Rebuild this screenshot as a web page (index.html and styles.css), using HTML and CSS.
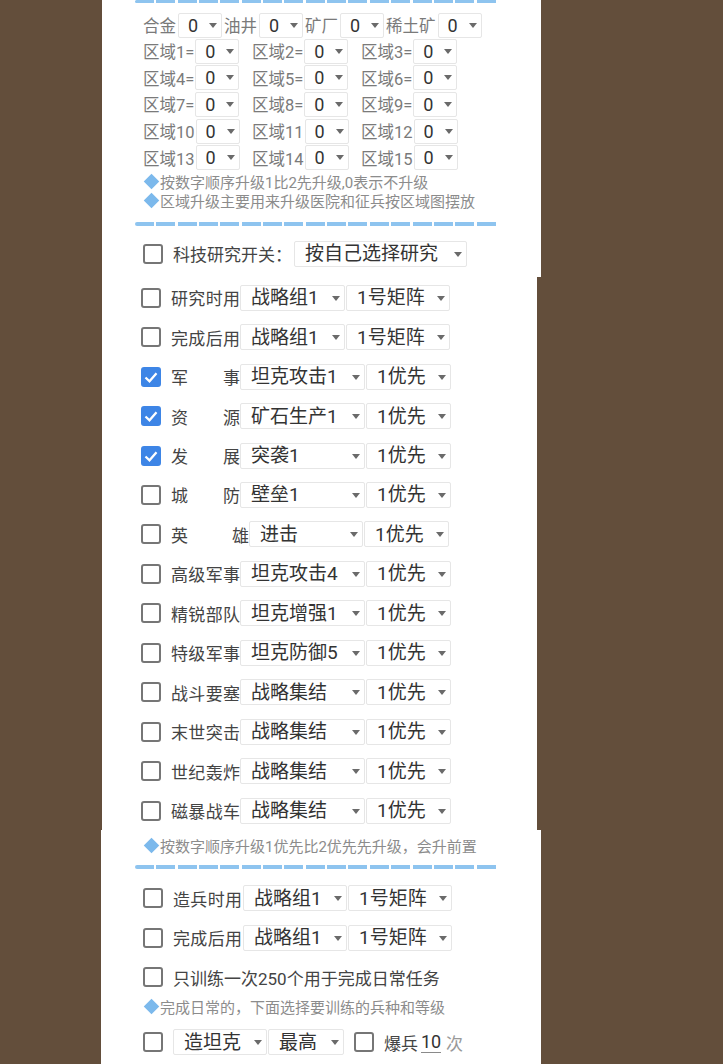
FILE: index.html
```html
<!DOCTYPE html>
<html lang="zh-CN">
<head>
    <meta charset="UTF-8">
    <meta name="viewport" content="width=device-width, initial-scale=1.0">
    <title>升级设置</title>
    <link rel="stylesheet" href="styles.css">
</head>
<body>
    <!-- 资源/区域升级 -->
    <div class="panel panel-top">
        <div class="sep sep-cut"></div>
        <div class="res-row">
            <span class="lbl">合金</span><span class="sel sel-num"><select><option>0</option><option>1</option></select></span>
            <span class="lbl">油井</span><span class="sel sel-num"><select><option>0</option><option>1</option></select></span>
            <span class="lbl">矿厂</span><span class="sel sel-num"><select><option>0</option><option>1</option></select></span>
            <span class="lbl">稀土矿</span><span class="sel sel-num"><select><option>0</option><option>1</option></select></span>
        </div>
        <div class="area-row">
            <div class="grp"><span class="lbl">区域1=</span><span class="sel sel-num"><select><option>0</option></select></span></div>
            <div class="grp"><span class="lbl">区域2=</span><span class="sel sel-num"><select><option>0</option></select></span></div>
            <div class="grp"><span class="lbl">区域3=</span><span class="sel sel-num"><select><option>0</option></select></span></div>
        </div>
        <div class="area-row">
            <div class="grp"><span class="lbl">区域4=</span><span class="sel sel-num"><select><option>0</option></select></span></div>
            <div class="grp"><span class="lbl">区域5=</span><span class="sel sel-num"><select><option>0</option></select></span></div>
            <div class="grp"><span class="lbl">区域6=</span><span class="sel sel-num"><select><option>0</option></select></span></div>
        </div>
        <div class="area-row">
            <div class="grp"><span class="lbl">区域7=</span><span class="sel sel-num"><select><option>0</option></select></span></div>
            <div class="grp"><span class="lbl">区域8=</span><span class="sel sel-num"><select><option>0</option></select></span></div>
            <div class="grp"><span class="lbl">区域9=</span><span class="sel sel-num"><select><option>0</option></select></span></div>
        </div>
        <div class="area-row">
            <div class="grp"><span class="lbl">区域10</span><span class="sel sel-num"><select><option>0</option></select></span></div>
            <div class="grp"><span class="lbl">区域11</span><span class="sel sel-num"><select><option>0</option></select></span></div>
            <div class="grp"><span class="lbl">区域12</span><span class="sel sel-num"><select><option>0</option></select></span></div>
        </div>
        <div class="area-row">
            <div class="grp"><span class="lbl">区域13</span><span class="sel sel-num"><select><option>0</option></select></span></div>
            <div class="grp"><span class="lbl">区域14</span><span class="sel sel-num"><select><option>0</option></select></span></div>
            <div class="grp"><span class="lbl">区域15</span><span class="sel sel-num"><select><option>0</option></select></span></div>
        </div>
        <div class="notes">
            <p class="note"><span class="dia"></span>按数字顺序升级1比2先升级,0表示不升级</p>
            <p class="note"><span class="dia"></span>区域升级主要用来升级医院和征兵按区域图摆放</p>
        </div>
        <div class="sep sep-top"></div>
        <div class="row switch-row">
            <label class="chk"><input type="checkbox"><span class="box"><svg viewBox="0 0 20 20"><polyline points="4.5,10.5 8.5,14.3 15.5,6.2"/></svg></span></label>
            <span class="name name-free">科技研究开关：</span>
            <span class="sel sel-mode"><select><option>按自己选择研究</option><option>按顺序研究</option></select></span>
        </div>
    </div>

    <!-- 科技研究 -->
    <div class="panel panel-mid">
        <div class="row">
            <label class="chk"><input type="checkbox"><span class="box"><svg viewBox="0 0 20 20"><polyline points="4.5,10.5 8.5,14.3 15.5,6.2"/></svg></span></label>
            <span class="name">研究时用</span>
            <span class="sel sel-a"><select><option>战略组1</option><option>战略组2</option></select></span>
            <span class="sel sel-b"><select><option>1号矩阵</option><option>2号矩阵</option></select></span>
        </div>
        <div class="row">
            <label class="chk"><input type="checkbox"><span class="box"><svg viewBox="0 0 20 20"><polyline points="4.5,10.5 8.5,14.3 15.5,6.2"/></svg></span></label>
            <span class="name">完成后用</span>
            <span class="sel sel-a"><select><option>战略组1</option><option>战略组2</option></select></span>
            <span class="sel sel-b"><select><option>1号矩阵</option><option>2号矩阵</option></select></span>
        </div>
        <div class="row">
            <label class="chk"><input type="checkbox" checked><span class="box"><svg viewBox="0 0 20 20"><polyline points="4.5,10.5 8.5,14.3 15.5,6.2"/></svg></span></label>
            <span class="name">军事</span>
            <span class="sel sel-c"><select><option>坦克攻击1</option></select></span>
            <span class="sel sel-d"><select><option>1优先</option><option>2优先</option></select></span>
        </div>
        <div class="row">
            <label class="chk"><input type="checkbox" checked><span class="box"><svg viewBox="0 0 20 20"><polyline points="4.5,10.5 8.5,14.3 15.5,6.2"/></svg></span></label>
            <span class="name">资源</span>
            <span class="sel sel-c"><select><option>矿石生产1</option></select></span>
            <span class="sel sel-d"><select><option>1优先</option><option>2优先</option></select></span>
        </div>
        <div class="row">
            <label class="chk"><input type="checkbox" checked><span class="box"><svg viewBox="0 0 20 20"><polyline points="4.5,10.5 8.5,14.3 15.5,6.2"/></svg></span></label>
            <span class="name">发展</span>
            <span class="sel sel-c"><select><option>突袭1</option></select></span>
            <span class="sel sel-d"><select><option>1优先</option><option>2优先</option></select></span>
        </div>
        <div class="row">
            <label class="chk"><input type="checkbox"><span class="box"><svg viewBox="0 0 20 20"><polyline points="4.5,10.5 8.5,14.3 15.5,6.2"/></svg></span></label>
            <span class="name">城防</span>
            <span class="sel sel-c"><select><option>壁垒1</option></select></span>
            <span class="sel sel-d"><select><option>1优先</option><option>2优先</option></select></span>
        </div>
        <div class="row">
            <label class="chk"><input type="checkbox"><span class="box"><svg viewBox="0 0 20 20"><polyline points="4.5,10.5 8.5,14.3 15.5,6.2"/></svg></span></label>
            <span class="name name-wide">英雄</span>
            <span class="sel sel-e"><select><option>进击</option></select></span>
            <span class="sel sel-d"><select><option>1优先</option><option>2优先</option></select></span>
        </div>
        <div class="row">
            <label class="chk"><input type="checkbox"><span class="box"><svg viewBox="0 0 20 20"><polyline points="4.5,10.5 8.5,14.3 15.5,6.2"/></svg></span></label>
            <span class="name">高级军事</span>
            <span class="sel sel-c"><select><option>坦克攻击4</option></select></span>
            <span class="sel sel-d"><select><option>1优先</option><option>2优先</option></select></span>
        </div>
        <div class="row">
            <label class="chk"><input type="checkbox"><span class="box"><svg viewBox="0 0 20 20"><polyline points="4.5,10.5 8.5,14.3 15.5,6.2"/></svg></span></label>
            <span class="name">精锐部队</span>
            <span class="sel sel-c"><select><option>坦克增强1</option></select></span>
            <span class="sel sel-d"><select><option>1优先</option><option>2优先</option></select></span>
        </div>
        <div class="row">
            <label class="chk"><input type="checkbox"><span class="box"><svg viewBox="0 0 20 20"><polyline points="4.5,10.5 8.5,14.3 15.5,6.2"/></svg></span></label>
            <span class="name">特级军事</span>
            <span class="sel sel-c"><select><option>坦克防御5</option></select></span>
            <span class="sel sel-d"><select><option>1优先</option><option>2优先</option></select></span>
        </div>
        <div class="row">
            <label class="chk"><input type="checkbox"><span class="box"><svg viewBox="0 0 20 20"><polyline points="4.5,10.5 8.5,14.3 15.5,6.2"/></svg></span></label>
            <span class="name">战斗要塞</span>
            <span class="sel sel-c"><select><option>战略集结</option></select></span>
            <span class="sel sel-d"><select><option>1优先</option><option>2优先</option></select></span>
        </div>
        <div class="row">
            <label class="chk"><input type="checkbox"><span class="box"><svg viewBox="0 0 20 20"><polyline points="4.5,10.5 8.5,14.3 15.5,6.2"/></svg></span></label>
            <span class="name">末世突击</span>
            <span class="sel sel-c"><select><option>战略集结</option></select></span>
            <span class="sel sel-d"><select><option>1优先</option><option>2优先</option></select></span>
        </div>
        <div class="row">
            <label class="chk"><input type="checkbox"><span class="box"><svg viewBox="0 0 20 20"><polyline points="4.5,10.5 8.5,14.3 15.5,6.2"/></svg></span></label>
            <span class="name">世纪轰炸</span>
            <span class="sel sel-c"><select><option>战略集结</option></select></span>
            <span class="sel sel-d"><select><option>1优先</option><option>2优先</option></select></span>
        </div>
        <div class="row">
            <label class="chk"><input type="checkbox"><span class="box"><svg viewBox="0 0 20 20"><polyline points="4.5,10.5 8.5,14.3 15.5,6.2"/></svg></span></label>
            <span class="name">磁暴战车</span>
            <span class="sel sel-c"><select><option>战略集结</option></select></span>
            <span class="sel sel-d"><select><option>1优先</option><option>2优先</option></select></span>
        </div>
    </div>

    <!-- 造兵 -->
    <div class="panel panel-bot">
        <p class="note"><span class="dia"></span>按数字顺序升级1优先比2优先先升级，会升前置</p>
        <div class="sep sep-bot"></div>
        <div class="row first-row">
            <label class="chk"><input type="checkbox"><span class="box"><svg viewBox="0 0 20 20"><polyline points="4.5,10.5 8.5,14.3 15.5,6.2"/></svg></span></label>
            <span class="name">造兵时用</span>
            <span class="sel sel-f"><select><option>战略组1</option><option>战略组2</option></select></span>
            <span class="sel sel-f"><select><option>1号矩阵</option><option>2号矩阵</option></select></span>
        </div>
        <div class="row">
            <label class="chk"><input type="checkbox"><span class="box"><svg viewBox="0 0 20 20"><polyline points="4.5,10.5 8.5,14.3 15.5,6.2"/></svg></span></label>
            <span class="name">完成后用</span>
            <span class="sel sel-f"><select><option>战略组1</option><option>战略组2</option></select></span>
            <span class="sel sel-f"><select><option>1号矩阵</option><option>2号矩阵</option></select></span>
        </div>
        <div class="row">
            <label class="chk"><input type="checkbox"><span class="box"><svg viewBox="0 0 20 20"><polyline points="4.5,10.5 8.5,14.3 15.5,6.2"/></svg></span></label>
            <span class="name name-free">只训练一次250个用于完成日常任务</span>
        </div>
        <p class="note"><span class="dia"></span>完成日常的，下面选择要训练的兵种和等级</p>
        <div class="row last-row">
            <label class="chk"><input type="checkbox"><span class="box"><svg viewBox="0 0 20 20"><polyline points="4.5,10.5 8.5,14.3 15.5,6.2"/></svg></span></label>
            <span class="sel sel-unit"><select><option>造坦克</option><option>造飞机</option></select></span>
            <span class="sel sel-lv"><select><option>最高</option><option>最低</option></select></span>
            <label class="chk chk-gap"><input type="checkbox"><span class="box"><svg viewBox="0 0 20 20"><polyline points="4.5,10.5 8.5,14.3 15.5,6.2"/></svg></span></label>
            <span class="name name-free">爆兵</span>
            <input type="text" class="times" value="10">
            <span class="unit">次</span>
        </div>
    </div>
</body>
</html>
```

FILE: styles.css
```css
body {
    margin: 0;
    background-color: #634e3b;
    font-family: Roboto, "Noto Sans CJK SC", sans-serif;
    color: #444;
}
p {
    margin: 0;
}
.panel {
    background: #fff;
    box-sizing: border-box;
}
.panel-top {
    margin-left: 102px;
    width: 439px;
    padding-bottom: 10px;
}
.panel-mid {
    margin-left: 102px;
    width: 435px;
    padding: 1px 0 0 39px;
}
.panel-bot {
    margin-left: 101px;
    width: 440px;
    height: 234px;
    padding: 5.5px 0 0 42px;
}

/* 蓝色虚线分隔 */
.sep {
    width: 363px;
    height: 4px;
    background: repeating-linear-gradient(to right, #8ec4ef 0 19px, transparent 19px 21.35px);
    border-radius: 2px;
}
.sep-cut {
    height: 3px;
    margin-left: 33px;
}
.sep-top {
    margin: 12px 0 0 33px;
}
.sep-bot {
    margin: 10.5px 0 0 -8px;
}

/* 下拉框 */
.sel {
    position: relative;
    display: inline-block;
    flex: none;
    height: 26px;
}
.sel select {
    appearance: none;
    -webkit-appearance: none;
    width: 100%;
    height: 100%;
    margin: 0;
    padding: 0 0 0 10px;
    border: 1px solid #e6e6e6;
    border-radius: 2px;
    background: #fff;
    color: #333;
    font-family: inherit;
    font-size: 19px;
    outline: none;
}
.sel:after {
    content: "";
    position: absolute;
    right: 5px;
    top: 11px;
    border-left: 4px solid transparent;
    border-right: 4px solid transparent;
    border-top: 5px solid #6a6a6a;
    pointer-events: none;
}
.sel-num {
    width: 44px;
    height: 25px;
}
.sel-num select {
    font-size: 18px;
    padding-left: 9px;
}
.sel-num:after {
    top: 10px;
}
.sel-mode { width: 173px; margin-left: 2px; }
.sel-a { width: 105px; }
.sel-b { width: 104px; margin-left: 1px; }
.sel-c { width: 125px; }
.sel-d { width: 85px; margin-left: 1px; }
.sel-e { width: 114px; }
.sel-f { width: 104px; margin-left: 1px; }
.sel-unit { width: 94px; }
.sel-unit select { padding-left: 10px; }
.sel-lv { width: 76px; margin-left: 1px; }

/* 资源和区域 */
.res-row {
    display: flex;
    align-items: center;
    height: 26px;
    margin-top: 9px;
    padding-left: 41px;
}
.res-row .sel {
    margin: 0 2px 0 2px;
}
.lbl {
    font-size: 16.5px;
    color: #7a7a7a;
    white-space: nowrap;
}
.area-row {
    display: flex;
    align-items: center;
    height: 26.6px;
    padding-left: 41px;
}
.grp {
    display: flex;
    align-items: center;
    width: 109px;
}
.grp .sel {
    margin-left: 1px;
}

/* 提示 */
.notes {
    margin-top: 1.5px;
    padding-left: 41px;
}
.note {
    display: flex;
    align-items: center;
    height: 19px;
    font-size: 15px;
    color: #8c8c8c;
    white-space: nowrap;
}
.dia {
    flex: none;
    width: 11px;
    height: 11px;
    margin: 0 3.5px 0 2.5px;
    background: #7cb9ec;
    transform: rotate(45deg);
}

/* 勾选行 */
.row {
    display: flex;
    align-items: center;
    height: 39.46px;
}
.switch-row {
    height: 26px;
    margin-top: 14.5px;
    padding-left: 41px;
}
.chk {
    display: inline-flex;
    flex: none;
    margin-right: 10px;
    cursor: pointer;
}
.chk input {
    display: none;
}
.box {
    display: block;
    width: 20px;
    height: 20px;
    box-sizing: border-box;
    border: 2px solid #767676;
    border-radius: 3px;
    background: #fff;
}
.box svg {
    display: none;
    width: 20px;
    height: 20px;
    margin: -2px;
    fill: none;
    stroke: #fff;
    stroke-width: 2.3;
}
.chk input:checked + .box {
    border-color: #3d85e6;
    background: #3d85e6;
}
.chk input:checked + .box svg {
    display: block;
}
.name {
    flex: none;
    width: 69px;
    font-size: 17px;
    color: #444;
    white-space: nowrap;
    text-align: justify;
    text-align-last: justify;
}
.name-wide {
    width: 78px;
}
.name-free {
    width: auto;
    text-align-last: auto;
}
.panel-bot .row {
    height: 39.5px;
}
.panel-bot .first-row {
    margin-top: 9.25px;
}
.last-row {
    margin-top: 6.5px;
}
.chk-gap {
    margin-left: 10px;
}
.times {
    width: 20px;
    margin-left: 3px;
    padding: 0;
    border: none;
    border-bottom: 1.5px solid #8a8a8a;
    font-family: inherit;
    font-size: 18px;
    color: #333;
    text-align: center;
    outline: none;
}
.unit {
    margin-left: 5px;
    font-size: 17px;
    color: #999;
}
```
